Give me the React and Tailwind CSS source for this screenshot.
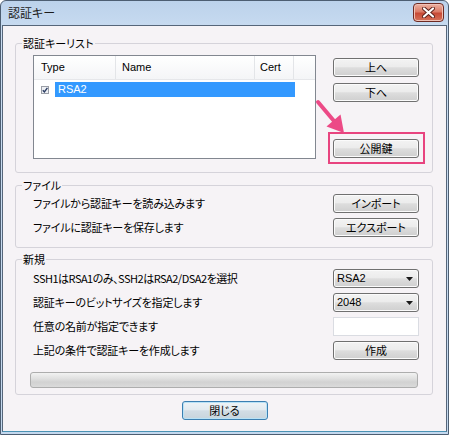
import React from 'react';

// Win7 style push button face
const face =
  'border border-[#707070] rounded-[3px] bg-[linear-gradient(#f3f3f3,#ececec_45%,#dddddd_52%,#cfcfcf)] shadow-[inset_0_0_0_1px_#fbfbfb]';

const Button = ({ children, className = '' }) => (
  <button
    className={`${face} h-[19px] w-[86px] flex items-center justify-center text-[11px] leading-none text-black ${className}`}
  >
    {children}
  </button>
);

const Combo = ({ value }) => (
  <div className={`${face} h-[19px] w-[86px] flex items-center justify-between pl-[3px] pr-[5px] text-[11px] leading-none`}>
    <span className="font-['Liberation_Sans',sans-serif]">{value}</span>
    <svg width="7" height="4" viewBox="0 0 7 4">
      <path d="M0 0h7L3.5 4z" fill="#1a1a1a" />
    </svg>
  </div>
);

const Group = ({ label, className = '', children }) => (
  <fieldset className={`ml-[12px] mr-[13px] border border-[#d5d3da] rounded-[3px] ${className}`}>
    <legend className="ml-[6px] px-[1px] text-[11px] leading-[16px]">{label}</legend>
    <div className="pl-[17px] pr-[13px]">{children}</div>
  </fieldset>
);

const Row = ({ label, tight = false, children }) => (
  <div className="h-[19px] flex items-center justify-between">
    <span className={`text-[11px] leading-none ${tight ? 'tracking-[-0.5px]' : 'tracking-[-0.2px]'}`}>{label}</span>
    {children}
  </div>
);

const KeyList = () => (
  <div className="w-[283px] h-[104px] border border-[#828790] bg-white flex flex-col font-['Liberation_Sans',sans-serif] text-[11px]">
    <div className="h-[24px] flex border-b border-[#e6e7ea] bg-[linear-gradient(#ffffff,#f4f5f7)]">
      <div className="w-[82px] pl-[7px] flex items-center border-r border-[#e3e5e8]">Type</div>
      <div className="w-[139px] pl-[6px] flex items-center border-r border-[#e3e5e8]">Name</div>
      <div className="w-[39px] pl-[5px] flex items-center border-r border-[#e3e5e8]">Cert</div>
      <div className="flex-1" />
    </div>
    <div className="mt-[2px] h-[15px] flex items-center">
      <svg className="ml-[7px]" width="8" height="8" viewBox="0 0 8 8">
        <rect x="0.5" y="0.5" width="7" height="7" fill="#eef0f4" stroke="#9a9ea6" />
        <path d="M1.8 4.2l1.6 1.8 3-4.2" fill="none" stroke="#2c3d63" strokeWidth="1.4" />
      </svg>
      <div className="ml-[6px] w-[240px] h-full bg-[#3399ff] text-white pl-[3px] flex items-center">RSA2</div>
    </div>
  </div>
);

export default function App() {
  return (
    <div className="w-[449px] h-[435px] flex flex-col rounded-t-[6px] border border-[#4d5e72] bg-[linear-gradient(#bcd2eb,#c9dcf1_30px,#c4d8ee)] font-['Noto_Sans_CJK_JP',sans-serif] [font-feature-settings:'palt'] text-black">
      {/* title bar */}
      <div className="h-[24px] flex items-start justify-between">
        <span className="pl-[7px] mt-[4px] text-[12px] leading-[16px] text-[#1b1b1b]">認証キー</span>
        <div className="mt-[2px] mr-[4px] w-[31px] h-[19px] rounded-[4px] border border-[#6e2a22] bg-[linear-gradient(#ecb2a2,#dc7c68_45%,#c84a36_55%,#d6735a)] shadow-[inset_0_0_0_1px_#f0c1b6] flex items-center justify-center">
          <svg width="13" height="11" viewBox="0 0 13 11">
            <path d="M2 1.5l9 8M11 1.5l-9 8" stroke="#5b2019" strokeWidth="4" strokeLinecap="round" />
            <path d="M2 1.5l9 8M11 1.5l-9 8" stroke="#ffffff" strokeWidth="2.2" strokeLinecap="round" />
          </svg>
        </div>
      </div>

      {/* client area */}
      <div className="relative flex-1 mx-[1px] mb-[2px] border border-[#56667a] border-b-[#4a93b4] bg-[#f6f3f6] pt-[9px] flex flex-col">
        <Group label="認証キーリスト">
          <div className="flex pt-[4px] pb-[13px]">
            <KeyList />
            <div className="ml-[17px] w-[86px] flex flex-col">
              <Button className="mt-[3px]">上へ</Button>
              <Button className="mt-[6px]">下へ</Button>
              <div className="mt-auto -mb-[5px] -ml-[5px] w-[97px] border-2 border-[#e8447f] pt-[5px] pb-[4px] pl-[3px]">
                <Button>公開鍵</Button>
              </div>
            </div>
          </div>
        </Group>

        <Group label="ファイル" className="mt-[4px]">
          <div className="pt-[1px] pb-[10px] flex flex-col gap-[5px]">
            <Row label="ファイルから認証キーを読み込みます">
              <Button>インポート</Button>
            </Row>
            <Row label="ファイルに認証キーを保存します">
              <Button>エクスポート</Button>
            </Row>
          </div>
        </Group>

        <Group label="新規" className="mt-[3px]">
          <div className="pt-[2px] pb-[6px] flex flex-col">
            <div className="flex flex-col gap-[5px]">
              <Row label="SSH1はRSA1のみ、SSH2はRSA2/DSA2を選択" tight>
                <Combo value="RSA2" />
              </Row>
              <Row label="認証キーのビットサイズを指定します">
                <Combo value="2048" />
              </Row>
              <Row label="任意の名前が指定できます">
                <div className="w-[86px] h-[19px] bg-white border border-[#dadce2]" />
              </Row>
              <Row label="上記の条件で認証キーを作成します">
                <Button>作成</Button>
              </Row>
            </div>
            <div className="mt-[12px] -ml-[3px] w-[388px] h-[16px] rounded-[3px] border border-[#adadad] bg-[linear-gradient(#f2f2f2,#e0e0e0_40%,#d2d2d2_65%,#dadada)]" />
          </div>
        </Group>

        <div className="mt-[6px] flex justify-center">
          <button className="h-[19px] w-[86px] flex items-center justify-center text-[11px] leading-none rounded-[3px] border border-[#3c7fb1] bg-[linear-gradient(#eef3f6,#e3ebf0_45%,#d3dde5_52%,#c8d4dc)] shadow-[inset_0_0_0_1px_#b9e2f6]">
            閉じる
          </button>
        </div>

        {/* pink pointer arrow */}
        <svg className="absolute left-[311px] top-[72px]" width="36" height="40" viewBox="0 0 36 40">
          <path d="M4 4L20 23" stroke="#ec4a86" strokeWidth="4" strokeLinecap="round" />
          <path d="M30 35L26.5 16.5L12.5 28.5Z" fill="#ec4a86" />
        </svg>
      </div>
    </div>
  );
}
